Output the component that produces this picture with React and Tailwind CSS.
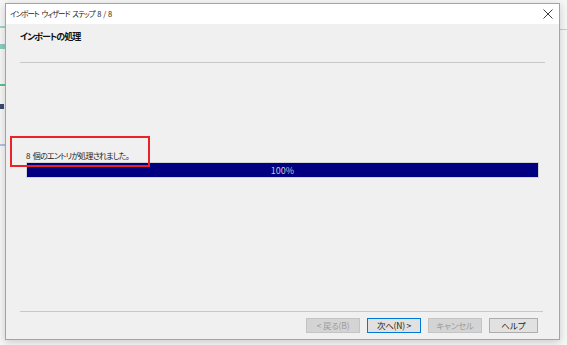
import React from 'react';

const jp = "font-['Meiryo_UI','Noto_Sans_CJK_JP',sans-serif] [font-feature-settings:'palt']";

function WizardButton({ label, disabled, focused }) {
  let cls = 'h-[15px] flex items-center justify-center text-[8.5px] leading-none border tracking-[-0.2px] ';
  if (disabled) cls += 'bg-[#d4d4d4] border-[#c4c4c4] text-[#9c9c9c]';
  else if (focused) cls += 'bg-[#e1e1e1] border-[#0078d7] text-[#1a1a1a]';
  else cls += 'bg-[#e1e1e1] border-[#adadad] text-[#1a1a1a]';
  return <div className={cls + ' w-[54px]'}>{label}</div>;
}

export default function App() {
  return (
    <div className={`relative w-[567px] h-[345px] overflow-hidden bg-[#f6f6f6] pt-[3px] pl-[5px] ${jp}`}>
      {/* bits of the app behind the dialog */}
      <div className="absolute left-0 top-[26px] w-[5px] h-[2px] bg-[#9ad6c8]" />
      <div className="absolute left-0 top-[44px] w-[5px] h-[5px] bg-[#8ccbbf]" />
      <div className="absolute left-0 top-[84px] w-[5px] h-[2px] bg-[#5cbf8e]" />
      <div className="absolute left-0 top-[104px] w-[4px] h-[5px] bg-[#3a4a6a]" />
      <div className="absolute left-0 top-[144px] w-[5px] h-[2px] bg-[#a9c2e6]" />
      <div className="absolute right-0 top-[29px] w-[7px] h-[1px] bg-[#a7dccd]" />

      <div className="relative w-[555px] h-[337px] border border-[#78aee0] bg-[#f0f0f0] flex flex-col shadow-[0_2px_8px_rgba(0,0,0,0.18)]">
        <div className="h-[20px] bg-white flex items-center justify-between pl-[4px] pr-[6px]">
          <span className="text-[7.5px] tracking-[-1px] text-[#1a1a1a] whitespace-pre">{'インポート\u2002ウィザード\u2002ステップ\u20028\u2002/\u20028'}</span>
          <svg width="10" height="10" viewBox="0 0 10 10">
            <path d="M0.5 0.5 L9.5 9.5 M9.5 0.5 L0.5 9.5" stroke="#3a3a3a" strokeWidth="1" />
          </svg>
        </div>

        <div className="flex-1 flex flex-col">
          <div className="mt-[7px] ml-[14px] h-[12px] flex items-center text-[9px] tracking-[-1px] font-bold text-[#111]">
            インポートの処理
          </div>
          <div className="mt-[19px] ml-[14px] mr-[14px] h-px bg-[#c8c8c8]" />

          <div className="mt-[87px] ml-[20px] h-[12px] flex items-center text-[8px] tracking-[-0.8px] text-[#222] whitespace-pre">
            {'8\u2002個のエントリが処理されました。'}
          </div>
          <div className="ml-[20px] mr-[20px] h-[16px] border border-[#d4d4d4] bg-[#000080] flex items-center justify-center text-[9px] text-[#c8c8d8] leading-none">
            100%
          </div>

          <div className="flex-1" />
          <div className="ml-[14px] mr-[16px] h-px bg-[#c8c8c8]" />
          <div className="mt-[6px] mb-[6px] mr-[21px] flex justify-end gap-[7px]">
            <WizardButton label="< 戻る(B)" disabled />
            <WizardButton label="次へ(N) >" focused />
            <WizardButton label="キャンセル" disabled />
            <div className="h-[15px] w-[49px] flex items-center justify-center text-[8.5px] leading-none border bg-[#e1e1e1] border-[#adadad] text-[#1a1a1a]">
              ヘルプ
            </div>
          </div>
        </div>

        {/* red annotation box */}
        <div className="absolute left-[4px] top-[132px] w-[140px] h-[31px] border-2 border-[#ec2028]" />
      </div>
    </div>
  );
}
